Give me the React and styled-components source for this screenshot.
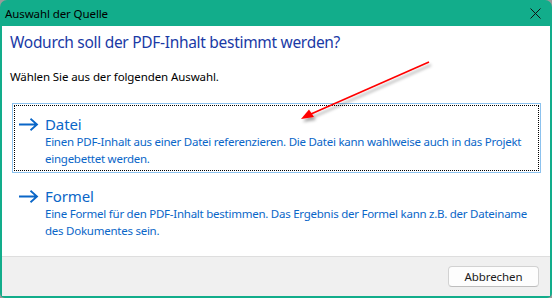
import React from 'react';
import styled, { createGlobalStyle } from 'styled-components';

const GlobalStyle = createGlobalStyle`
  html, body {
    margin: 0;
    padding: 0;
    background: #9a9a9a;
  }
  body {
    font-family: "Noto Sans", "Open Sans", sans-serif;
  }
`;

const Window = styled.div`
  position: relative;
  box-sizing: border-box;
  width: 552px;
  height: 298px;
  background: #12ad8b;
  border-radius: 7px 7px 5px 5px;
  padding: 0 2px 2px 2px;
  display: flex;
  flex-direction: column;
  overflow: hidden;
`;

const TitleBar = styled.div`
  height: 26px;
  flex: none;
  display: flex;
  align-items: center;
  justify-content: space-between;
  padding: 0 9px 0 3px;
  font-size: 11.5px;
  letter-spacing: -0.1px;
  color: #000;
`;

const CloseButton = styled.div`
  width: 12px;
  height: 12px;
  display: flex;
  align-items: center;
  justify-content: center;
`;

const Body = styled.div`
  flex: 1;
  background: #fff;
  display: flex;
  flex-direction: column;
`;

const Content = styled.div`
  flex: 1;
  padding: 0 9px 0 8px;
`;

const Heading = styled.h1`
  margin: 6px 0 0 0;
  font-size: 15.5px;
  line-height: 21px;
  font-weight: 400;
  color: #1a3aa6;
  letter-spacing: -0.3px;
  white-space: nowrap;
`;

const Instruction = styled.p`
  margin: 16px 0 0 0;
  font-size: 11.5px;
  line-height: 16px;
  color: #000;
  letter-spacing: -0.1px;
`;

const Links = styled.div`
  margin-top: 18px;
  padding-left: 2px;
  display: flex;
  flex-direction: column;
  gap: 2px;
`;

const CommandLink = styled.div`
  box-sizing: border-box;
  height: 70px;
  border: 1px solid ${props => (props.selected ? '#8cc2ee' : 'transparent')};
  outline: ${props => (props.selected ? '1px dotted #000' : 'none')};
  outline-offset: -3px;
  padding: 10px 8px 0 5px;
  display: grid;
  grid-template-columns: 27px 1fr;
  color: #0a66c8;
  cursor: pointer;
`;

const LinkTitle = styled.div`
  font-size: 15px;
  line-height: 20px;
  letter-spacing: -0.1px;
`;

const LinkText = styled.div`
  font-size: 11.5px;
  line-height: 16.5px;
  letter-spacing: -0.25px;
  white-space: nowrap;
`;

const ArrowCell = styled.div`
  height: 20px;
  display: flex;
  align-items: center;
`;

const Footer = styled.div`
  flex: none;
  height: 40px;
  box-sizing: border-box;
  background: #f0f0f0;
  border-top: 1px solid #dedede;
  display: flex;
  align-items: center;
  justify-content: flex-end;
  padding-right: 11px;
`;

const Button = styled.button`
  width: 91px;
  height: 21px;
  box-sizing: border-box;
  background: #fdfdfd;
  border: 1px solid #d2d2d2;
  border-bottom-color: #bdbdbd;
  border-radius: 4px;
  font-family: inherit;
  font-size: 11.5px;
  color: #1b1b1b;
  padding: 0;
  letter-spacing: -0.1px;
`;

const Overlay = styled.svg`
  position: absolute;
  left: 0;
  top: 0;
  pointer-events: none;
`;

function Arrow() {
  return <svg width="21" height="13" viewBox="0 0 21 13">
    <path d="M1 6.5 H19 M12.5 0.8 L19 6.5 L12.5 12.2"
      fill="none" stroke="#0a66c8" strokeWidth="1.8" strokeLinejoin="miter" />
  </svg>;
}

function Link(props) {
  return <CommandLink selected={props.selected}>
    <ArrowCell><Arrow /></ArrowCell>
    <div>
      <LinkTitle>{props.title}</LinkTitle>
      <LinkText>{props.line1}<br />{props.line2}</LinkText>
    </div>
  </CommandLink>;
}

export default function App() {
  return <>
    <GlobalStyle />
    <Window>
      <TitleBar>
        <span>Auswahl der Quelle</span>
        <CloseButton>
          <svg width="11" height="11" viewBox="0 0 11 11">
            <path d="M0.5 0.5 L10.5 10.5 M10.5 0.5 L0.5 10.5" stroke="#111" strokeWidth="1" />
          </svg>
        </CloseButton>
      </TitleBar>
      <Body>
        <Content>
          <Heading>Wodurch soll der PDF-Inhalt bestimmt werden?</Heading>
          <Instruction>Wählen Sie aus der folgenden Auswahl.</Instruction>
          <Links>
            <Link selected title="Datei"
              line1="Einen PDF-Inhalt aus einer Datei referenzieren. Die Datei kann wahlweise auch in das Projekt"
              line2="eingebettet werden." />
            <Link title="Formel"
              line1="Eine Formel für den PDF-Inhalt bestimmen. Das Ergebnis der Formel kann z.B. der Dateiname"
              line2="des Dokumentes sein." />
          </Links>
        </Content>
        <Footer>
          <Button>Abbrechen</Button>
        </Footer>
      </Body>
      <Overlay width="552" height="298" viewBox="0 0 552 298">
        <defs>
          <filter id="shadow" x="-20%" y="-20%" width="140%" height="160%">
            <feDropShadow dx="2" dy="3" stdDeviation="1.5" floodColor="#000" floodOpacity="0.35" />
          </filter>
        </defs>
        <g filter="url(#shadow)">
          <line x1="429" y1="62" x2="311" y2="114" stroke="#ff0000" strokeWidth="1.6" />
          <polygon points="301,119 309,109.5 314,117" fill="#ff0000" />
        </g>
      </Overlay>
    </Window>
  </>;
}
